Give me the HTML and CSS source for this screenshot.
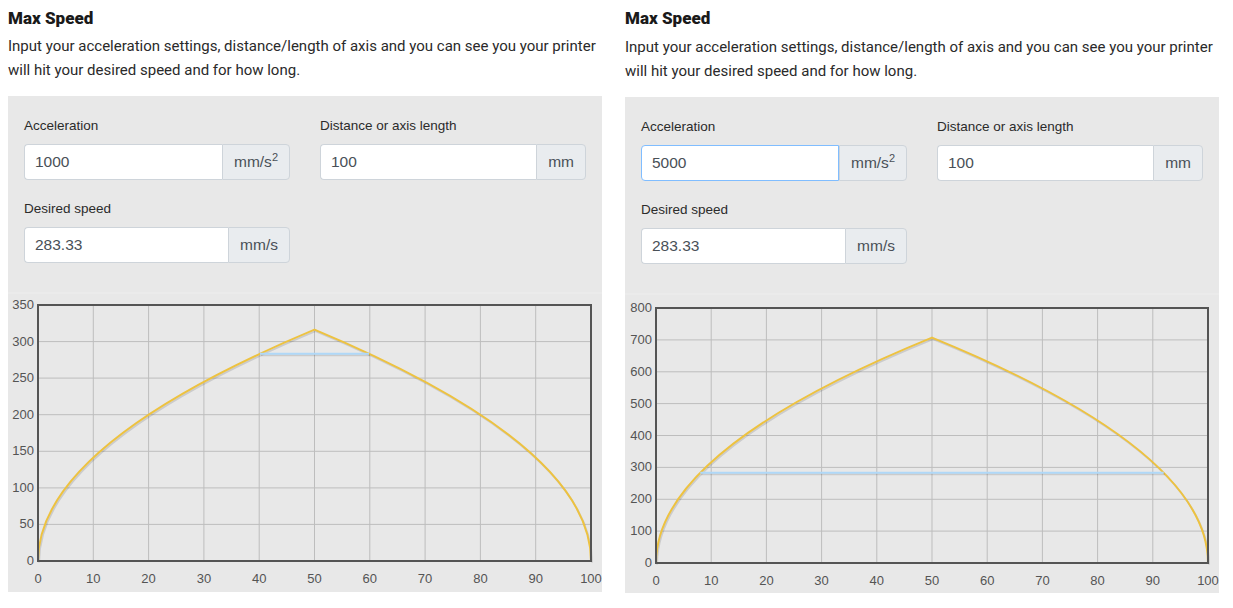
FILE: index.html
```html
<!DOCTYPE html>
<html>
<head>
<meta charset="utf-8">
<link rel="stylesheet" href="styles.css">
</head>
<body>
<div class="page">
  <section class="calc">
    <h2 class="title">Max Speed</h2>
    <p class="desc">Input your acceleration settings, distance/length of axis and you can see you your printer will hit your desired speed and for how long.</p>
    <div class="panel">
      <div class="form">
        <div class="field">
          <label class="label">Acceleration</label>
          <div class="group"><input class="input" value="1000"><span class="addon">mm/s<sup>2</sup></span></div>
        </div>
        <div class="field">
          <label class="label">Distance or axis length</label>
          <div class="group"><input class="input" value="100"><span class="addon">mm</span></div>
        </div>
        <div class="field">
          <label class="label">Desired speed</label>
          <div class="group"><input class="input" value="283.33"><span class="addon">mm/s</span></div>
        </div>
      </div>
      <div class="chart">
        <svg class="plot" width="594" height="300" viewBox="0 0 594 300">
          <g class="grid">
            <line x1="85.3" y1="13" x2="85.3" y2="269"/><line x1="140.6" y1="13" x2="140.6" y2="269"/><line x1="195.9" y1="13" x2="195.9" y2="269"/><line x1="251.2" y1="13" x2="251.2" y2="269"/><line x1="306.5" y1="13" x2="306.5" y2="269"/><line x1="361.8" y1="13" x2="361.8" y2="269"/><line x1="417.1" y1="13" x2="417.1" y2="269"/><line x1="472.4" y1="13" x2="472.4" y2="269"/><line x1="527.7" y1="13" x2="527.7" y2="269"/>
            <line x1="30" y1="232.4" x2="583" y2="232.4"/><line x1="30" y1="195.9" x2="583" y2="195.9"/><line x1="30" y1="159.3" x2="583" y2="159.3"/><line x1="30" y1="122.7" x2="583" y2="122.7"/><line x1="30" y1="86.1" x2="583" y2="86.1"/><line x1="30" y1="49.6" x2="583" y2="49.6"/>
          </g>
          <g class="ylab">
            <text x="26" y="273">0</text><text x="26" y="236.4">50</text><text x="26" y="199.9">100</text><text x="26" y="163.3">150</text><text x="26" y="126.7">200</text><text x="26" y="90.1">250</text><text x="26" y="53.6">300</text><text x="26" y="17">350</text>
          </g>
          <g class="xlab">
            <text x="30" y="291">0</text><text x="85.3" y="291">10</text><text x="140.6" y="291">20</text><text x="195.9" y="291">30</text><text x="251.2" y="291">40</text><text x="306.5" y="291">50</text><text x="361.8" y="291">60</text><text x="417.1" y="291">70</text><text x="472.4" y="291">80</text><text x="527.7" y="291">90</text><text x="583" y="291">100</text>
          </g>
          <path class="shadow" d="M30,269 Q30,153.35 306.5,37.7 Q583,153.35 583,269"/>
          <path class="curve" d="M30,269 Q30,153.35 306.5,37.7 Q583,153.35 583,269"/>
          <line class="shadow" x1="252" y1="61.8" x2="361" y2="61.8"/>
          <line class="hold" x1="252" y1="61.8" x2="361" y2="61.8"/>
          <rect class="box" x="30" y="13" width="553" height="256"/>
        </svg>
      </div>
    </div>
  </section>

  <section class="calc calc-second">
    <h2 class="title">Max Speed</h2>
    <p class="desc">Input your acceleration settings, distance/length of axis and you can see you your printer will hit your desired speed and for how long.</p>
    <div class="panel">
      <div class="form">
        <div class="field">
          <label class="label">Acceleration</label>
          <div class="group"><input class="input input-focus" value="5000"><span class="addon">mm/s<sup>2</sup></span></div>
        </div>
        <div class="field">
          <label class="label">Distance or axis length</label>
          <div class="group"><input class="input" value="100"><span class="addon">mm</span></div>
        </div>
        <div class="field">
          <label class="label">Desired speed</label>
          <div class="group"><input class="input" value="283.33"><span class="addon">mm/s</span></div>
        </div>
      </div>
      <div class="chart">
        <svg class="plot" width="594" height="300" viewBox="0 0 594 300">
          <g class="grid">
            <line x1="86.2" y1="15" x2="86.2" y2="270"/><line x1="141.4" y1="15" x2="141.4" y2="270"/><line x1="196.6" y1="15" x2="196.6" y2="270"/><line x1="251.8" y1="15" x2="251.8" y2="270"/><line x1="307" y1="15" x2="307" y2="270"/><line x1="362.2" y1="15" x2="362.2" y2="270"/><line x1="417.4" y1="15" x2="417.4" y2="270"/><line x1="472.6" y1="15" x2="472.6" y2="270"/><line x1="527.8" y1="15" x2="527.8" y2="270"/>
            <line x1="31" y1="238.1" x2="583" y2="238.1"/><line x1="31" y1="206.3" x2="583" y2="206.3"/><line x1="31" y1="174.4" x2="583" y2="174.4"/><line x1="31" y1="142.5" x2="583" y2="142.5"/><line x1="31" y1="110.6" x2="583" y2="110.6"/><line x1="31" y1="78.8" x2="583" y2="78.8"/><line x1="31" y1="46.9" x2="583" y2="46.9"/>
          </g>
          <g class="ylab">
            <text x="27" y="274">0</text><text x="27" y="242.1">100</text><text x="27" y="210.3">200</text><text x="27" y="178.4">300</text><text x="27" y="146.5">400</text><text x="27" y="114.6">500</text><text x="27" y="82.8">600</text><text x="27" y="50.9">700</text><text x="27" y="19">800</text>
          </g>
          <g class="xlab">
            <text x="31" y="292">0</text><text x="86.2" y="292">10</text><text x="141.4" y="292">20</text><text x="196.6" y="292">30</text><text x="251.8" y="292">40</text><text x="307" y="292">50</text><text x="362.2" y="292">60</text><text x="417.4" y="292">70</text><text x="472.6" y="292">80</text><text x="527.8" y="292">90</text><text x="583" y="292">100</text>
          </g>
          <path class="shadow" d="M31,270 Q31,157.3 307,44.6 Q583,157.3 583,270"/>
          <path class="curve" d="M31,270 Q31,157.3 307,44.6 Q583,157.3 583,270"/>
          <line class="shadow" x1="75.3" y1="179.7" x2="538.7" y2="179.7"/>
          <line class="hold" x1="75.3" y1="179.7" x2="538.7" y2="179.7"/>
          <rect class="box" x="31" y="15" width="552" height="255"/>
        </svg>
      </div>
    </div>
  </section>
</div>
</body>
</html>
```

FILE: styles.css
```css
html, body {
  margin: 0;
  padding: 0;
  background: #ffffff;
}
body {
  margin: 8px;
  font-family: Roboto, "Liberation Sans", Arial, sans-serif;
  color: #222222;
}
.page {
  display: grid;
  grid-template-columns: 594px 594px;
  column-gap: 23px;
}
.title {
  margin: 0;
  font-family: Roboto, "Liberation Sans", sans-serif;
  font-weight: 900;
  font-size: 17px;
  line-height: 20px;
  color: #1a1a1a;
}
.desc {
  margin: 6px 0 14px 0;
  font-size: 15px;
  line-height: 24px;
  color: #2a2a2a;
}
.calc-second .desc {
  margin-top: 7px;
}
.panel {
  background: #e8e8e8;
}
.form {
  display: grid;
  grid-template-columns: 266px 266px;
  column-gap: 30px;
  row-gap: 19px;
  padding: 20px 16px 29px 16px;
}
.label {
  display: block;
  font-family: "Liberation Sans", Arial, sans-serif;
  font-size: 13.5px;
  line-height: 20px;
  color: #2b2b2b;
  margin-bottom: 8px;
}
.group {
  display: flex;
  height: 36px;
}
.input {
  flex: 1;
  min-width: 0;
  box-sizing: border-box;
  height: 36px;
  margin: 0;
  padding: 0 10px;
  border: 1px solid #ced4da;
  border-right: none;
  border-radius: 4px 0 0 4px;
  background: #ffffff;
  font-family: "Liberation Sans", Arial, sans-serif;
  font-size: 15.5px;
  color: #495057;
  outline: none;
}
.input-focus {
  border: 1px solid #80bdff;
}
.addon {
  display: flex;
  align-items: center;
  box-sizing: border-box;
  height: 36px;
  padding: 0 11px;
  border: 1px solid #ced4da;
  border-radius: 0 4px 4px 0;
  background: #e9ecef;
  font-family: "Liberation Sans", Arial, sans-serif;
  font-size: 15.5px;
  color: #495057;
}
.addon sup {
  font-size: 11px;
  line-height: 1;
  align-self: flex-start;
  margin-top: 7px;
}
.chart {
  border-top: 2px solid #ebebeb;
  height: 298px;
  overflow: hidden;
}
.plot {
  display: block;
  margin-top: -2px;
}
.grid line {
  stroke: #bdbdbd;
  stroke-width: 1;
}
.box {
  fill: none;
  stroke: #545454;
  stroke-width: 2;
}
.ylab text, .xlab text {
  font-family: "Liberation Sans", Arial, sans-serif;
  font-size: 13px;
  fill: #545454;
}
.ylab text {
  text-anchor: end;
}
.xlab text {
  text-anchor: middle;
}
.curve {
  fill: none;
  stroke: #edc240;
  stroke-width: 2;
}
.hold {
  stroke: #afd8f8;
  stroke-width: 2;
}
.shadow {
  fill: none;
  stroke: rgba(0, 0, 0, 0.12);
  stroke-width: 2;
  transform: translate(1px, 1.5px);
}
```
